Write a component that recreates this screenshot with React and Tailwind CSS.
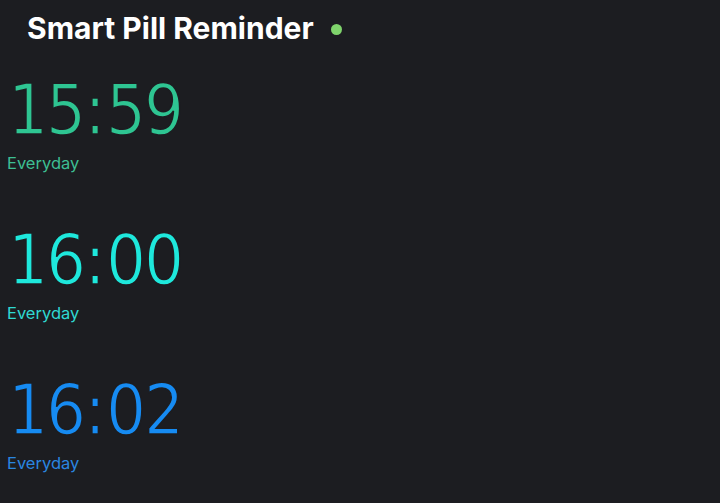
const items = [
  { t: "15:59", c: "text-[#2ec592]", s: "text-[#3dbf93]" },
  { t: "16:00", c: "text-[#1ee8dc]", s: "text-[#2fd9d2]" },
  { t: "16:02", c: "text-[#168bf2]", s: "text-[#2a86e0]" },
];

function Time({ t, c }) {
  return (
    <div
      className={`${c} flex font-['DejaVu_Sans_Condensed','DejaVu_Sans',sans-serif] text-[70px] leading-[64px] [-webkit-text-stroke:1.5px_#1c1d21] [paint-order:fill_stroke]`}
    >
      {t.split("").map((ch, i) =>
        ch === ":" ? (
          <span key={i} className="w-[22px] text-center">:</span>
        ) : (
          <span key={i} className="w-[38px] text-center">{ch}</span>
        )
      )}
    </div>
  );
}

export default function App() {
  return (
    <div className="w-[720px] h-[503px] bg-[#1c1d21] overflow-hidden">
      <div className="flex items-center h-[56px] pl-[27px] gap-[17px]">
        <span className="text-white text-[30px] font-bold font-['Inter',sans-serif] leading-none">
          Smart Pill Reminder
        </span>
        <span className="w-[11px] h-[11px] rounded-full bg-[#7fd46c] mt-[2px]" />
      </div>
      <div className="flex flex-col">
        {items.map((it) => (
          <div key={it.t} className="h-[150px] pl-[8px] pt-[22px]">
            <Time t={it.t} c={it.c} />
            <div className={`${it.s} font-['Inter',sans-serif] text-[16.5px] leading-[20px] mt-[11px] -ml-[1px]`}>
              Everyday
            </div>
          </div>
        ))}
      </div>
    </div>
  );
}
